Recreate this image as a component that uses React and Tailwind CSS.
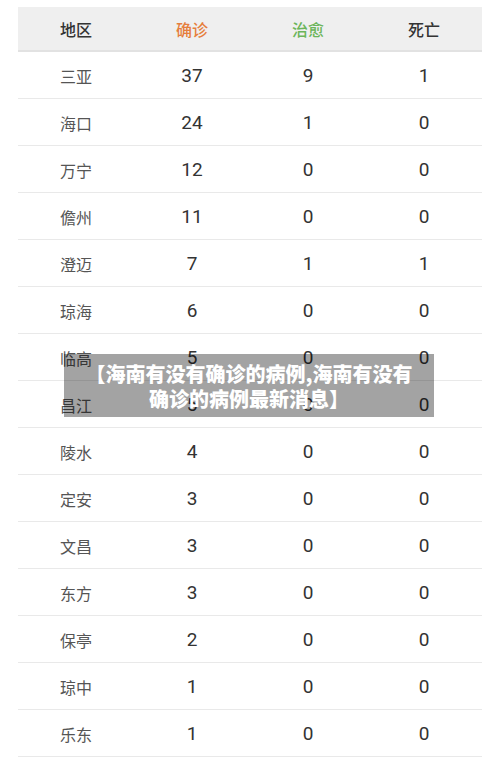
import React from "react";

const rows = [
  ["三亚", 37, 9, 1],
  ["海口", 24, 1, 0],
  ["万宁", 12, 0, 0],
  ["儋州", 11, 0, 0],
  ["澄迈", 7, 1, 1],
  ["琼海", 6, 0, 0],
  ["临高", 5, 0, 0],
  ["昌江", 5, 0, 0],
  ["陵水", 4, 0, 0],
  ["定安", 3, 0, 0],
  ["文昌", 3, 0, 0],
  ["东方", 3, 0, 0],
  ["保亭", 2, 0, 0],
  ["琼中", 1, 0, 0],
  ["乐东", 1, 0, 0],
];

const cjk = { fontFamily: '"Noto Sans CJK SC", "Noto Sans", sans-serif' };
const num = { fontFamily: 'Roboto, "Noto Sans CJK SC", sans-serif' };

const App = () => {
  return (
    <div className="relative w-[500px] h-[771px] bg-white overflow-hidden" style={cjk}>
      <div className="mx-[18px] pt-[7px]">
        {/* header */}
        <div className="grid grid-cols-4 h-[45px] bg-[#efefef] border-b-2 border-[#e2e2e2] items-center text-[16px] font-medium">
          <div className="text-center text-[#333]">地区</div>
          <div className="text-center text-[#e67e3c]">确诊</div>
          <div className="text-center text-[#6bb55a]">治愈</div>
          <div className="text-center text-[#333]">死亡</div>
        </div>

        {rows.map(([name, a, b, c]) => (
          <div key={name} className="grid grid-cols-4 h-[47px] border-b border-[#e9e9e9] items-center pt-[2px]">
            <div className="text-center text-[16px] text-[#555]">{name}</div>
            <div className="text-center text-[19px] text-[#333]" style={num}>{a}</div>
            <div className="text-center text-[19px] text-[#333]" style={num}>{b}</div>
            <div className="text-center text-[19px] text-[#333]" style={num}>{c}</div>
          </div>
        ))}
      </div>

      {/* caption over the picture */}
      <div className="absolute left-[64px] top-[354px] w-[370px] h-[63px] bg-[rgba(0,0,0,0.36)] flex flex-col items-center justify-center">
        <p className="text-white font-black text-[20px] leading-[25px] text-center">
          【海南有没有确诊的病例,海南有没有
          <br />
          确诊的病例最新消息】
        </p>
      </div>
    </div>
  );
};

export default App;
